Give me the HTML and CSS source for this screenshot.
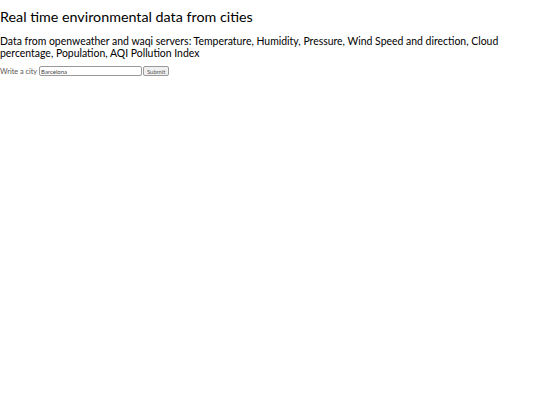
FILE: index.html
```html
<!DOCTYPE html>
<html lang="en">
<head>
  <meta charset="UTF-8" />
  <meta name="viewport" content="width=device-width, initial-scale=1.0"/>
  <title>Environmental data</title>
  <link rel="stylesheet" href="styles.css">
</head>
<body>
  <h1>Real time environmental data from cities</h1>
  <h2>Data from openweather and waqi servers: Temperature, Humidity, Pressure, Wind Speed and direction, Cloud percentage, Population, AQI Pollution Index</h2>
  <form class="city-form">
    <label for="city">Write a city</label>
    <input type="text" id="city" name="city" value="Barcelona">
    <button type="submit">Submit</button>
  </form>
</body>
</html>
```
FILE: styles.css
```css
body {
  margin: 0;
  font-family: Lato, "Open Sans", sans-serif;
  color: #000;
  background: #fff;
}
h1 {
  font-size: 14.3px;
  font-weight: normal;
  margin: 8px 0 0;
  line-height: 18px;
}
h2 {
  font-size: 10.45px;
  font-weight: normal;
  margin: 9px 0 0;
  line-height: 12px;
}
.city-form {
  margin-top: 7px;
  font-size: 7.3px;
  color: #555;
  display: flex;
  align-items: center;
}
.city-form label {
  margin-right: 2px;
}
.city-form input {
  box-sizing: border-box;
  width: 103px;
  height: 10px;
  margin: 0;
  padding: 0 1px;
  font-family: inherit;
  font-size: 6px;
  border: 1px solid #999;
  border-radius: 2px;
  color: #444;
}
.city-form button {
  box-sizing: border-box;
  width: 26px;
  height: 10px;
  margin: 0 0 0 1px;
  padding: 0;
  font-family: inherit;
  font-size: 6px;
  color: #555;
  background: #f0f0f0;
  border: 1px solid #999;
  border-radius: 2px;
}
```
